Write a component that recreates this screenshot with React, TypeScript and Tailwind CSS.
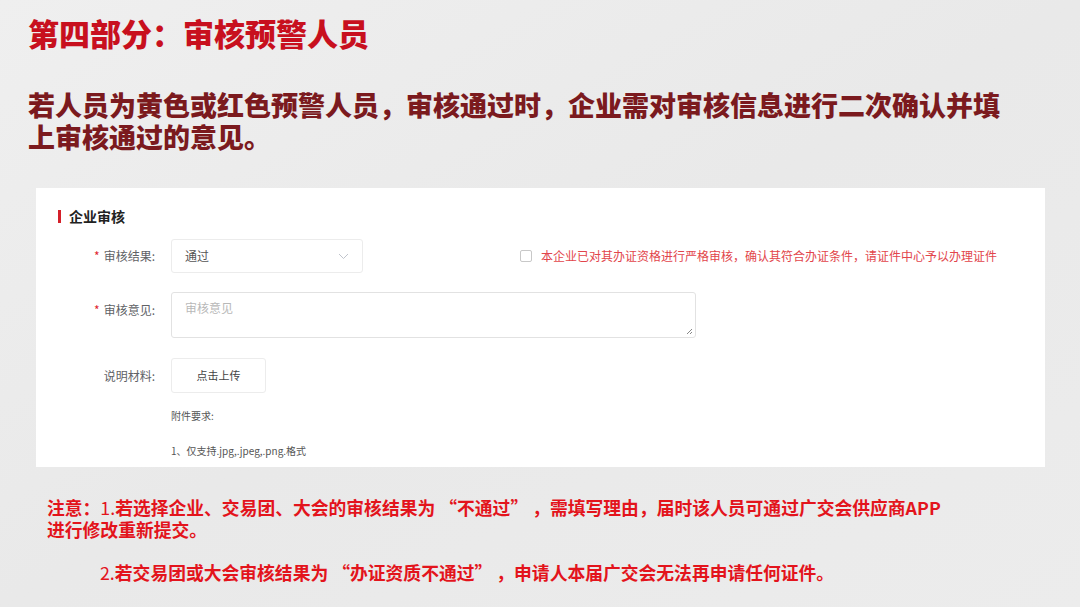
import React from 'react';

const cjk = "font-['Noto_Sans_CJK_SC','Noto_Sans',sans-serif]";

const FormLabel: React.FC<{ text: string; required?: boolean }> = ({ text, required }) => (
    <div className="flex w-[135px] shrink-0 items-center justify-end pr-[16px] text-[12px] text-[#606266]">
        {required && <span className="mr-[4px] text-[#e0262e]">*</span>}
        {text}:
    </div>
);

export default function App() {
    return (
        <div
            lang="zh-CN"
            className={`${cjk} flex h-[607px] w-[1080px] flex-col overflow-hidden bg-gradient-to-br from-[#efefef] via-[#e9e9e9] to-[#ececec] [text-spacing-trim:space-all]`}
        >
            <div className="px-[28px] pt-[13px]">
                <h1 className="text-[31px] leading-[40px] font-black text-[#c8101e]">
                    第四部分：审核预警人员
                </h1>
                <p className="mt-[36px] text-[27px] leading-[32px] font-black whitespace-nowrap text-[#7b1a1e]">
                    若人员为黄色或红色预警人员，审核通过时，企业需对审核信息进行二次确认并填
                    <br />
                    上审核通过的意见。
                </p>
            </div>

            <div className="mx-[36px] mt-[35px] h-[279px] w-[1009px] shrink-0 bg-white pt-[18px]">
                <div className="ml-[22px] flex items-center">
                    <span className="h-[13px] w-[3px] bg-[#d4202a]" />
                    <span className="ml-[8px] text-[14px] font-bold text-[#222]">企业审核</span>
                </div>

                <div className="mt-[12px] flex items-center">
                    <FormLabel text="审核结果" required />
                    <div className="flex h-[34px] w-[192px] items-center justify-between rounded-[3px] border border-[#ececec] px-[13px] text-[12px] text-[#555]">
                        <span>通过</span>
                        <svg width="11" height="7" viewBox="0 0 11 7" fill="none">
                            <path d="M1 1l4.5 4.5L10 1" stroke="#c0c4cc" strokeWidth="1" />
                        </svg>
                    </div>
                    <div className="ml-[157px] flex items-center">
                        <span className="h-[12px] w-[12px] rounded-[2px] border border-[#c8c8c8] bg-white" />
                        <span className="ml-[9px] text-[12px] text-[#e2454b]">
                            本企业已对其办证资格进行严格审核，确认其符合办证条件，请证件中心予以办理证件
                        </span>
                    </div>
                </div>

                <div className="mt-[19px] flex items-start">
                    <div className="pt-[9px]">
                        <FormLabel text="审核意见" required />
                    </div>
                    <div className="relative h-[46px] w-[525px] rounded-[3px] border border-[#e2e2e2] px-[13px] pt-[6px] text-[12px] text-[#b8b8b8]">
                        审核意见
                        <svg className="absolute right-[2px] bottom-[2px]" width="7" height="7" viewBox="0 0 7 7">
                            <path d="M6 1L1 6M6 4L4 6" stroke="#888" strokeWidth="1" />
                        </svg>
                    </div>
                </div>

                <div className="mt-[20px] flex items-center">
                    <FormLabel text="说明材料" />
                    <div className="flex h-[35px] w-[95px] items-center justify-center rounded-[3px] border border-[#ececec] text-[11px] text-[#444]">
                        点击上传
                    </div>
                </div>

                <div className="ml-[135px] mt-[15px] text-[10px] text-[#555]">附件要求:</div>
                <div className="ml-[135px] mt-[20px] text-[10px] text-[#555]">1、仅支持.jpg,.jpeg,.png.格式</div>
            </div>

            <div className="px-[47px] pt-[29px] text-[17.8px] leading-[22px] font-bold whitespace-nowrap text-[#e3141c]">
                <p>
                    注意：<span className="font-normal">1.</span>若选择企业、交易团、大会的审核结果为 “不通过” ，需填写理由，届时该人员可通过广交会供应商APP
                    <br />
                    进行修改重新提交。
                </p>
                <p className="mt-[21px] pl-[53px]">
                    <span className="font-normal">2.</span>若交易团或大会审核结果为 “办证资质不通过” ，申请人本届广交会无法再申请任何证件。
                </p>
            </div>
        </div>
    );
}
